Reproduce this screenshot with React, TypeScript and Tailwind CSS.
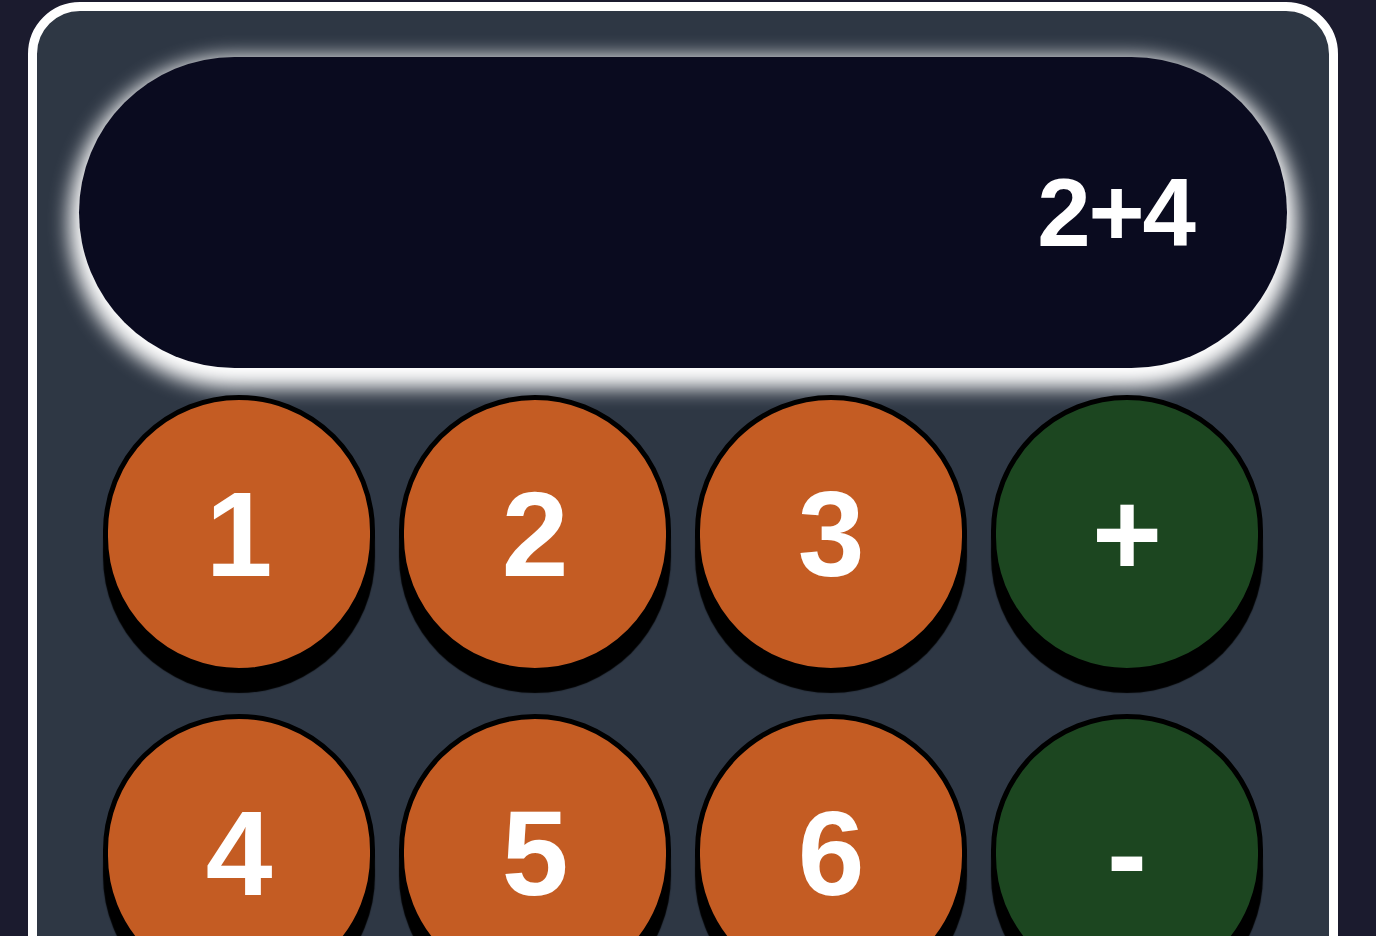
const rows = [
  ["1", "2", "3", "+"],
  ["4", "5", "6", "-"],
  ["7", "8", "9", "*"],
  ["C", "0", "=", "/"],
];

const isOp = (k: string) => ["+", "-", "*", "/", "="].includes(k);

export default function App() {
  return (
    <div className="h-screen overflow-hidden bg-[#1b1b2e] font-['Liberation_Sans',Arial,sans-serif]">
      <div className="ml-[28px] mt-[2px] w-[1310px] rounded-[52px] border-[9px] border-white bg-[#2e3744] px-[42px] pt-[46px] pb-[60px]">
        <div className="flex h-[311px] items-center justify-end rounded-full bg-[#0a0b1f] pr-[93px] shadow-[0_10px_20px_10px_#ffffff]">
          <span className="text-[96px] font-bold leading-none tracking-[-2px] text-white">2+4</span>
        </div>

        <div className="mt-[27px] flex flex-col items-center gap-[41px]">
          {rows.map((row, i) => (
            <div key={i} className="flex gap-[24px]">
              {row.map((k) => (
                <button
                  key={k}
                  className={
                    "flex h-[278px] w-[272px] items-center justify-center rounded-full border-[5px] border-black text-[120px] font-bold leading-none text-white shadow-[0_20px_1px_#000] " +
                    (isOp(k) ? "bg-[#1c4620]" : "bg-[#c45c23]")
                  }
                >
                  {k}
                </button>
              ))}
            </div>
          ))}
        </div>
      </div>
    </div>
  );
}
